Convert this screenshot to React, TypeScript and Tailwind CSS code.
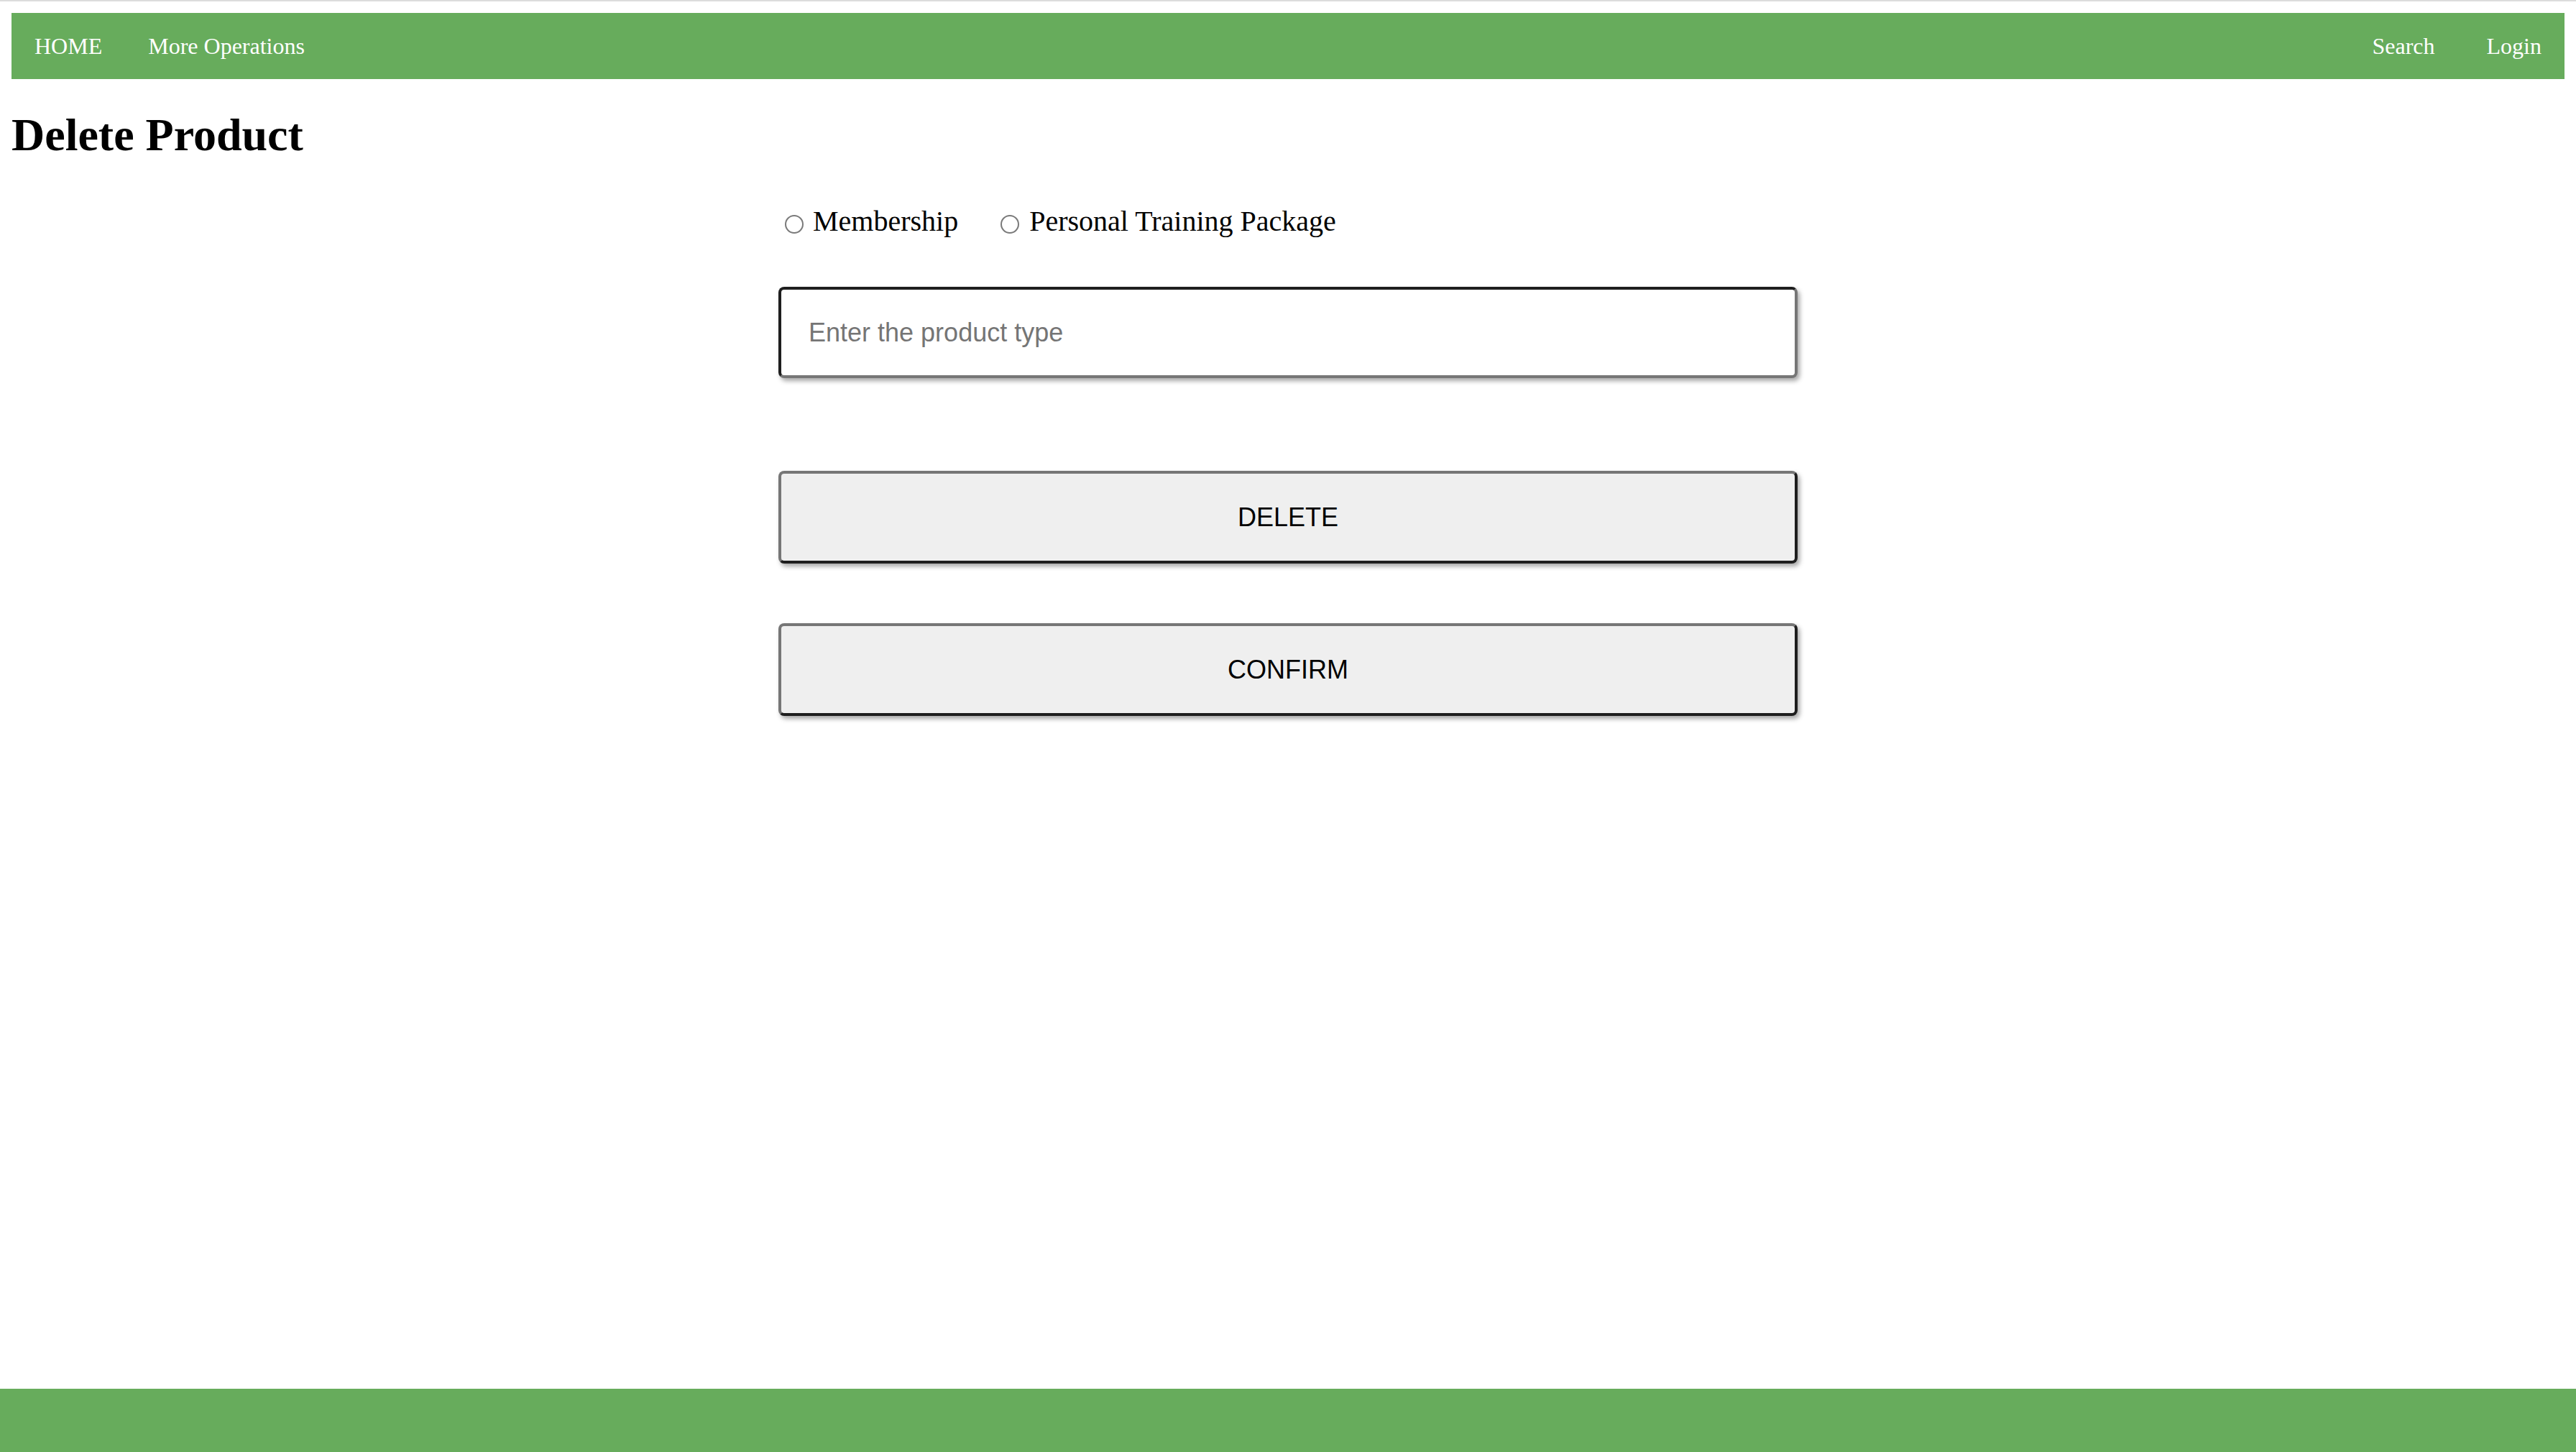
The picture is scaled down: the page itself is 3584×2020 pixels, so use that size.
import React from "react";

export default function App() {
  return (
    <div
      className="min-h-screen flex flex-col bg-white text-black"
      style={{ fontFamily: '"Liberation Serif", "Times New Roman", serif' }}
    >
      <div className="h-[2px] bg-[#dcdcdc]" />
      <div className="px-4 pt-4">
        <nav className="h-[92px] bg-[#67ac5c] flex items-center justify-between text-[32px] leading-[37px] text-white">
          <ul className="flex items-center">
            <li className="px-8">HOME</li>
            <li className="px-8">More Operations</li>
          </ul>
          <ul className="flex items-center gap-2">
            <li className="px-8">Search</li>
            <li className="px-8">Login</li>
          </ul>
        </nav>
      </div>

      <h1 className="mx-4 mt-[41px] text-[64px] leading-[74px] font-bold">Delete Product</h1>

      <div className="w-[1418px] mx-auto mt-[60px] flex flex-col">
        <div className="flex items-start text-[40px] leading-[46px]">
          <span className="mt-[14px] ml-[9px] w-[26px] h-[26px] rounded-full border-2 border-[#7a7a7a] bg-white shrink-0" />
          <span className="ml-[13px]">Membership</span>
          <span className="mt-[14px] ml-[59px] w-[26px] h-[26px] rounded-full border-2 border-[#7a7a7a] bg-white shrink-0" />
          <span className="ml-[14px]">Personal Training Package</span>
        </div>

        <div
          className="mt-[68px] h-[127px] flex items-center rounded-[8px] border-4 border-t-[#1e1e1e] border-l-[#1e1e1e] border-b-[#767676] border-r-[#767676] bg-white pl-[38px] shadow-[3px_4px_6px_rgba(0,0,0,0.35)]"
          style={{ fontFamily: '"Liberation Sans", Arial, sans-serif' }}
        >
          <span className="text-[36px] text-[#757575]">Enter the product type</span>
        </div>

        <button
          className="mt-[129px] h-[129px] flex items-center justify-center rounded-[8px] border-4 border-t-[#767676] border-l-[#767676] border-b-[#1e1e1e] border-r-[#1e1e1e] bg-[#efefef] text-[36px] text-black shadow-[3px_4px_6px_rgba(0,0,0,0.35)]"
          style={{ fontFamily: '"Liberation Sans", Arial, sans-serif' }}
        >
          DELETE
        </button>

        <button
          className="mt-[83px] h-[129px] flex items-center justify-center rounded-[8px] border-4 border-t-[#767676] border-l-[#767676] border-b-[#1e1e1e] border-r-[#1e1e1e] bg-[#efefef] text-[36px] text-black shadow-[3px_4px_6px_rgba(0,0,0,0.35)]"
          style={{ fontFamily: '"Liberation Sans", Arial, sans-serif' }}
        >
          CONFIRM
        </button>
      </div>

      <footer className="mt-auto h-[88px] bg-[#67ac5c]" />
    </div>
  );
}
